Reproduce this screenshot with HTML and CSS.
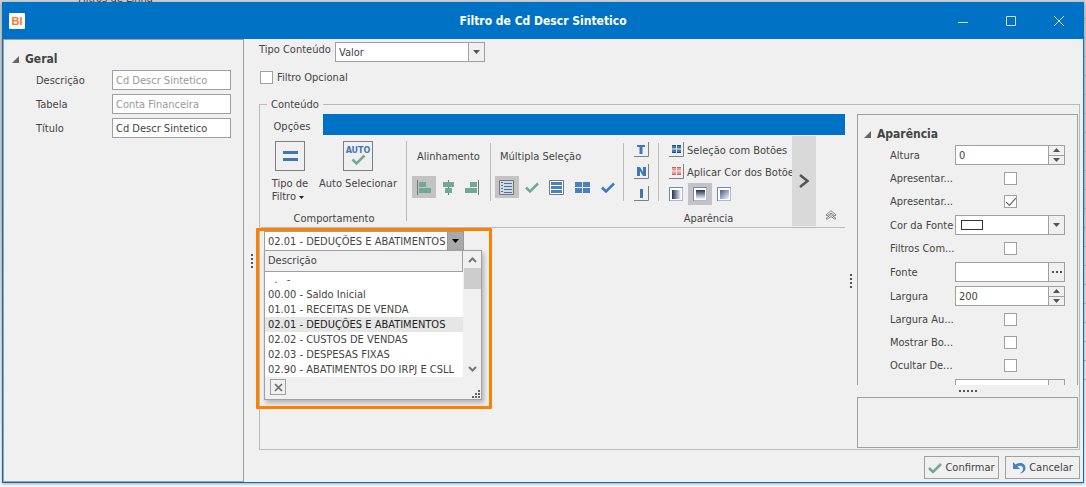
FILE: index.html
```html
<!DOCTYPE html>
<html lang="pt-BR">
<head>
<meta charset="utf-8">
<title>Filtro de Cd Descr Sintetico</title>
<link rel="stylesheet" href="styles.css">
</head>
<body>
<div class="backdrop" aria-hidden="true"><span>Filtros de Linha</span></div>
<main class="dialog">
  <header class="titlebar">
    <svg class="app-logo" viewBox="0 0 16 16"><rect width="16" height="16" rx="1" fill="#fff"/><text x="8" y="12" text-anchor="middle">BI</text></svg>
    <h1>Filtro de Cd Descr Sintetico</h1>
    <div class="window-buttons">
      <button aria-label="Minimizar"><svg viewBox="0 0 10 10"><path d="M0 6.5H10"/></svg></button>
      <button aria-label="Maximizar"><svg viewBox="0 0 10 10"><path d="M.5 .5H9.5V9.5H.5Z"/></svg></button>
      <button aria-label="Fechar"><svg viewBox="0 0 10 10"><path d="M0 0L10 10M10 0L0 10"/></svg></button>
    </div>
  </header>
  <div class="body">
    <section class="side-panel">
      <h2 class="prop-title">Geral</h2>
      <div class="prop-row"><label for="descricao">Descrição</label><input class="field" id="descricao" value="Cd Descr Sintetico" disabled></div>
      <div class="prop-row"><label for="tabela">Tabela</label><input class="field" id="tabela" value="Conta Financeira" disabled></div>
      <div class="prop-row"><label for="titulo">Título</label><input class="field" id="titulo" value="Cd Descr Sintetico"></div>
    </section>
    <div class="splitter vertical"><i></i></div>
    <section class="main">
      <div class="type-row">
        <label for="tipo">Tipo Conteúdo</label>
        <div class="select-box"><select id="tipo"><option>Valor</option></select><svg class="caret" viewBox="0 0 7 4"><path d="M0 0H7L3.500 4Z"/></svg></div>
      </div>
      <label class="optional"><input type="checkbox" class="check">Filtro Opcional</label>
      <fieldset class="content-group">
        <legend>Conteúdo</legend>
        <div class="workspace">
          <div class="tabs"><button class="tab">Opções</button><div class="tab-fill"></div></div>
          <div class="ribbon">
            <div class="ribbon-scroll">
              <div class="ribbon-group behavior">
                <div class="large-tools">
                  <button class="large-tool"><svg viewBox="0 0 30 30"><rect x=".5" y=".5" width="29" height="29" fill="#f0f0f0" stroke="#808080"/><path d="M8 10H23V13H8ZM8 17H23V20H8Z" fill="#4177b9"/></svg><span>Tipo de<br>Filtro <svg class="mini-caret" viewBox="0 0 5 3"><path d="M0 0H5L2.500 3Z"/></svg></span></button>
                  <button class="large-tool"><svg viewBox="0 0 30 30"><rect x=".5" y=".5" width="29" height="29" fill="#f0f0f0" stroke="#808080"/><text class="auto-text" x="15" y="12" text-anchor="middle">AUTO</text><path d="M9.500 18.500L13.500 22.500L21.500 14.500" fill="none" stroke="#73a896" stroke-width="2.500"/></svg><span>Auto Selecionar</span></button>
                </div>
                <div class="group-name">Comportamento</div>
              </div>
              <div class="ribbon-group appearance">
                <div class="tool-columns">
                  <div class="tool-block align">
                    <span class="tool-title">Alinhamento</span>
                    <div class="tools">
                      <button class="tool on" aria-label="Esquerda"><svg viewBox="0 0 16 16"><path d="M1.500 1V16" stroke="#777"/><path d="M3 3H10V8H3ZM3 9H15V14H3Z" fill="#73a896"/></svg></button>
                      <button class="tool" aria-label="Centro"><svg viewBox="0 0 16 16"><path d="M8.500 1V16" stroke="#777"/><path d="M3 3H14V8H3ZM5 9H12V14H5Z" fill="#73a896"/></svg></button>
                      <button class="tool" aria-label="Direita"><svg viewBox="0 0 16 16"><path d="M14.500 1V16" stroke="#777"/><path d="M6 3H13V8H6ZM1 9H13V14H1Z" fill="#73a896"/></svg></button>
                    </div>
                  </div>
                  <div class="tool-block multiple">
                    <span class="tool-title">Múltipla Seleção</span>
                    <div class="tools">
                      <button class="tool on" aria-label="Lista"><svg viewBox="0 0 16 16"><path d="M.5 1.500H14.500V15.500H.5Z" fill="#d8d8d8" stroke="#777"/><path d="M2 3.500H4M2 6.500H4M2 9.500H4M2 12.500H4M5 4.500H13M5 7.500H13M5 10.500H13M5 13.500H13" stroke="#3976bb"/></svg></button>
                      <button class="tool" aria-label="Marcar"><svg viewBox="0 0 16 16"><path d="M2 8.500L6 12.500L14 4.500" fill="none" stroke="#73a896" stroke-width="2.500"/></svg></button>
                      <button class="tool" aria-label="Linhas"><svg viewBox="0 0 16 16"><path d="M.5 1.500H14.500V15.500H.5Z" fill="#fff" stroke="#777"/><path d="M2 3H13V6H2ZM2 7H13V10H2ZM2 11H13V14H2Z" fill="#4a82bd"/></svg></button>
                      <button class="tool" aria-label="Blocos"><svg viewBox="0 0 16 16"><path d="M1 3H8V8H1ZM9 3H16V8H9ZM1 9H8V14H1ZM9 9H16V14H9Z" fill="#4a82bd"/></svg></button>
                      <button class="tool" aria-label="Confirmar seleção"><svg viewBox="0 0 16 16"><path d="M3 8.500L7 12.500L15 4.500" fill="none" stroke="#3d79c8" stroke-width="2.500"/></svg></button>
                    </div>
                  </div>
                  <div class="tool-block letters">
                    <button class="tool" aria-label="T"><svg viewBox="0 0 16 16"><path d="M1 14.500H15.500V0" fill="none" stroke="#808080"/><path d="M4 3H12V5H9.500V12H6.500V5H4Z" fill="#4177b9"/></svg></button>
                    <button class="tool" aria-label="N"><svg viewBox="0 0 16 16"><path d="M1 14.500H15.500V0" fill="none" stroke="#808080"/><path d="M4 3H7L10 8V3H13V12H10L7 7V12H4Z" fill="#4177b9"/></svg></button>
                    <button class="tool" aria-label="I"><svg viewBox="0 0 16 16"><path d="M1 14.500H15.500V0" fill="none" stroke="#808080"/><path d="M7 3H10V12H7Z" fill="#4177b9"/></svg></button>
                  </div>
                  <div class="tool-block button-styles">
                    <button class="wide-tool"><svg viewBox="0 0 16 16"><path d="M1 14.500H15.500V0" fill="none" stroke="#808080"/><path d="M4 3H8V6.500H4ZM9 3H13V6.500H9ZM4 7.500H8V11H4ZM9 7.500H13V11H9Z" fill="#4177b9"/><path d="M4 3.500H8M9 3.500H13M4 10.500H8M9 10.500H13" stroke="#294f80"/></svg>Seleção com Botões</button>
                    <button class="wide-tool"><svg viewBox="0 0 16 16"><path d="M1 14.500H15.500V0" fill="none" stroke="#808080"/><path d="M4 3H8V6.500H4ZM9 3H13V6.500H9ZM4 7.500H8V11H4ZM9 7.500H13V11H9Z" fill="#ee9a94"/><path d="M4 3.500H8M9 3.500H13M4 10.500H8M9 10.500H13" stroke="#bd6863"/></svg>Aplicar Cor dos Botões</button>
                    <div class="tools">
                      <button class="tool" aria-label="Gradiente horizontal"><svg viewBox="0 0 16 16"><defs><linearGradient id="gh"><stop stop-color="#26314d"/><stop offset="1" stop-color="#f4f6fb"/></linearGradient><linearGradient id="gv" x2="0" y2="1"><stop stop-color="#26314d"/><stop offset="1" stop-color="#f4f6fb"/></linearGradient><linearGradient id="gd" x2="1" y2="1"><stop stop-color="#46587f"/><stop offset="1" stop-color="#f4f6fb"/></linearGradient></defs><rect x="1.500" y="1.500" width="13" height="13" fill="#fff" stroke="#aab8dc"/><path d="M1.500 15V1.500H15" fill="none" stroke="#7387bb"/><rect x="4" y="4" width="9" height="9" fill="url(#gh)"/></svg></button>
                      <button class="tool on" aria-label="Gradiente vertical"><svg viewBox="0 0 16 16"><rect x="1.500" y="1.500" width="13" height="13" fill="#fff" stroke="#aab8dc"/><path d="M1.500 15V1.500H15" fill="none" stroke="#7387bb"/><rect x="4" y="4" width="9" height="9" fill="url(#gv)"/></svg></button>
                      <button class="tool" aria-label="Gradiente diagonal"><svg viewBox="0 0 16 16"><rect x="1.500" y="1.500" width="13" height="13" fill="#fff" stroke="#aab8dc"/><path d="M1.500 15V1.500H15" fill="none" stroke="#7387bb"/><rect x="4" y="4" width="9" height="9" fill="url(#gd)"/></svg></button>
                    </div>
                  </div>
                </div>
                <div class="group-name">Aparência</div>
              </div>
            </div>
            <button class="ribbon-next" aria-label="Avançar"><svg viewBox="0 0 12 14"><path d="M2 1L9.500 7L2 13" fill="none" stroke="#555" stroke-width="2.500"/></svg></button>
            <button class="ribbon-collapse" aria-label="Recolher"><svg viewBox="0 0 12 10"><path d="M1 5L6 .7L11 5L10 6L6 3L2 6ZM1 8.500L6 4.500L11 8.500L10 9.300L6 6.500L2 9.300Z" fill="#fff" stroke="#666" stroke-width=".8"/></svg></button>
          </div>
          <div class="preview">
            <div class="combo">
              <input aria-label="Conta financeira" value="02.01 - DEDUÇÕES E ABATIMENTOS">
              <button aria-label="Abrir lista"><svg viewBox="0 0 7 4"><path d="M0 0H7L3.500 4Z"/></svg></button>
              <div class="popup">
                <div class="popup-list">
                  <table>
                    <thead><tr><th>Descrição</th></tr></thead>
                    <tbody>
                      <tr><td>&nbsp; . &nbsp; -</td></tr>
                      <tr><td>00.00 - Saldo Inicial</td></tr>
                      <tr><td>01.01 - RECEITAS DE VENDA</td></tr>
                      <tr class="current"><td>02.01 - DEDUÇÕES E ABATIMENTOS</td></tr>
                      <tr><td>02.02 - CUSTOS DE VENDAS</td></tr>
                      <tr><td>02.03 - DESPESAS FIXAS</td></tr>
                      <tr><td>02.90 - ABATIMENTOS DO IRPJ E CSLL</td></tr>
                    </tbody>
                  </table>
                  <div class="scrollbar">
                    <svg viewBox="0 0 9 6"><path d="M1 5L4.500 1.500L8 5"/></svg>
                    <div class="thumb"></div>
                    <svg viewBox="0 0 9 6"><path d="M1 1L4.500 4.500L8 1"/></svg>
                  </div>
                </div>
                <div class="popup-footer">
                  <button aria-label="Limpar"><svg viewBox="0 0 9 9"><path d="M1 1L8 8M8 1L1 8"/></svg></button>
                  <svg class="grip" viewBox="0 0 8 8"><path d="M6 0H8V2H6ZM3 3H5V5H3ZM6 3H8V5H6ZM0 6H2V8H0ZM3 6H5V8H3ZM6 6H8V8H6Z"/></svg>
                </div>
              </div>
            </div>
            <div class="highlight"></div>
          </div>
        </div>
        <div class="splitter vertical narrow"><i></i></div>
        <div class="inspector">
          <section class="properties">
            <h2 class="prop-title">Aparência</h2>
            <div class="prop-row"><label for="altura">Altura</label><div class="spin"><input class="field" id="altura" value="0"><span class="spin-buttons"><button aria-label="Aumentar altura"><svg viewBox="0 0 7 4"><path d="M0 4H7L3.500 0Z"/></svg></button><button aria-label="Diminuir altura"><svg viewBox="0 0 7 4"><path d="M0 0H7L3.500 4Z"/></svg></button></span></div></div>
            <div class="prop-row flag"><label for="ap1">Apresentar...</label><input type="checkbox" class="check" id="ap1"></div>
            <div class="prop-row flag"><label for="ap2">Apresentar...</label><input type="checkbox" class="check" id="ap2" checked></div>
            <div class="prop-row"><label for="cor">Cor da Fonte</label><button class="color-box" id="cor"><span class="swatch"></span><span class="end"><svg viewBox="0 0 7 4"><path d="M0 0H7L3.500 4Z"/></svg></span></button></div>
            <div class="prop-row flag"><label for="fcom">Filtros Com...</label><input type="checkbox" class="check" id="fcom"></div>
            <div class="prop-row"><label for="fonte">Fonte</label><div class="spin"><input class="field" id="fonte"><button class="more" aria-label="Escolher fonte"><svg viewBox="0 0 10 2"><path d="M0 0H2V2H0ZM4 0H6V2H4ZM8 0H10V2H8Z"/></svg></button></div></div>
            <div class="prop-row"><label for="largura">Largura</label><div class="spin"><input class="field" id="largura" value="200"><span class="spin-buttons"><button aria-label="Aumentar largura"><svg viewBox="0 0 7 4"><path d="M0 4H7L3.500 0Z"/></svg></button><button aria-label="Diminuir largura"><svg viewBox="0 0 7 4"><path d="M0 0H7L3.500 4Z"/></svg></button></span></div></div>
            <div class="prop-row flag"><label for="laut">Largura Au...</label><input type="checkbox" class="check" id="laut"></div>
            <div class="prop-row flag"><label for="mbo">Mostrar Bo...</label><input type="checkbox" class="check" id="mbo"></div>
            <div class="prop-row flag"><label for="ode">Ocultar De...</label><input type="checkbox" class="check" id="ode"></div>
            <div class="prop-row"><label for="pos">Posição</label><div class="select-box"><select id="pos"><option>Acima</option></select></div></div>
          </section>
          <div class="splitter horizontal"><i></i></div>
          <div class="hint"></div>
        </div>
      </fieldset>
      <footer class="actions">
        <button><svg viewBox="0 0 14 14"><path d="M1 7L5 11L13 3" fill="none" stroke="#73a896" stroke-width="2.500"/></svg>Confirmar</button>
        <button><svg viewBox="0 0 14 14"><path d="M1 1V8H8L5.500 5.500C8 4 11 4.500 11 7.500C11 9.500 10 11 8 12.500C11.500 12 13.500 9.500 13.500 7C13.500 2.500 8 .5 3.500 3.500Z" fill="#4a82bd"/></svg>Cancelar</button>
      </footer>
    </section>
  </div>
</main>
</body>
</html>
```

FILE: styles.css
```css
* { box-sizing: border-box; }
body { margin: 0; padding: 2px 2px 4px; min-height: 100vh; display: flex; background: #d4d4d4; color: #444; font: 11px/15px "DejaVu Sans Condensed", "Noto Sans", sans-serif; }
button, input, select { font: inherit; color: inherit; margin: 0; padding: 0; border: 0; background: none; border-radius: 0; outline: 0; }
button { display: flex; align-items: center; justify-content: center; }
h1, h2 { margin: 0; font-size: 12px; }
svg { flex: none; display: block; }

.backdrop { position: absolute; inset: 0; overflow: hidden; background: repeating-linear-gradient(transparent 0 18px, #b5b5b5 18px 19px) right / 3px 390px no-repeat, linear-gradient(#cfcfcf 40%, #fafafa 96%); background-position: right top, 0 0; }
.backdrop span { position: absolute; left: 78px; top: -9px; }

.dialog { position: relative; flex: 1; min-width: 0; display: flex; flex-direction: column; background: #f0f0f0; border: 1px solid #0072c6; box-shadow: 0 1px 3px #0005; }
.titlebar { height: 36px; display: flex; align-items: center; padding-left: 6px; background: #0072c6; color: #fff; }
.titlebar h1 { flex: 1; text-align: center; padding-left: 122px; }
.app-logo { width: 16px; height: 16px; }
.app-logo text { font: bold 11px "Liberation Sans", sans-serif; fill: #f37b2c; }
.window-buttons { display: flex; }
.window-buttons button { width: 48px; height: 36px; }
.window-buttons svg { width: 10px; height: 10px; fill: none; stroke: #d5dbe2; }

.body { flex: 1; display: flex; min-height: 0; }
.side-panel { flex: 0 0 241px; min-width: 0; border: 1px solid #a0a0a0; padding: 11px 12px 0 8px; }
.prop-title { display: flex; align-items: center; height: 17px; }
.prop-title::before { content: ""; width: 7px; height: 7px; margin-right: 6px; background: #666; clip-path: polygon(100% 0, 100% 100%, 0 100%); }
.side-panel .prop-row label { flex: 0 0 76px; }
.prop-row { display: flex; align-items: center; height: 24px; padding-left: 24px; }
.prop-row label { flex: 0 0 65px; white-space: nowrap; }
.field { flex: 1; width: 100%; min-width: 0; height: 20px; padding: 0 3px; border: 1px solid #a0a0a0; background: #fff; }
.field:disabled { color: #999; }

.splitter { display: flex; align-items: center; justify-content: center; }
.vertical { flex: 0 0 15px; }
.vertical.narrow { flex-basis: 12px; }
.splitter i { width: 2px; height: 14px; background: repeating-linear-gradient(#555 0 2px, transparent 2px 4px); }
.splitter.horizontal { flex: 0 0 12px; }
.splitter.horizontal i { width: 18px; height: 2px; background: repeating-linear-gradient(90deg, #555 0 2px, transparent 2px 4px); }

.main { flex: 1; min-width: 0; display: flex; flex-direction: column; padding: 3px 3px 3px 0; }
.type-row { display: flex; }
.type-row label { width: 76px; }
.select-box { position: relative; display: flex; flex: 1; min-width: 0; }
.type-row .select-box { flex: 0 0 150px; }
.select-box select { appearance: none; width: 100%; height: 20px; padding: 0 3px; border: 1px solid #a0a0a0; background: linear-gradient(90deg, #a0a0a0 1px, #f0f0f0 1px) right / 16px 100% no-repeat #fff; }
.caret { position: absolute; right: 5px; top: 8px; width: 7px; height: 4px; fill: #555; pointer-events: none; }
.optional { display: flex; align-items: center; gap: 4px; align-self: flex-start; margin: 8px 0 12px 1px; }
.check { appearance: none; width: 13px; height: 13px; border: 1px solid #a0a0a0; background: #fff; }
.check:checked::before { content: ""; display: block; width: 9px; height: 4px; margin: 2px 0 0 1px; border: solid #555; border-width: 0 0 1px 1px; rotate: -48deg; }

.content-group { flex: 1; min-width: 0; min-height: 0; display: flex; margin: 0; padding: 2px 1px 1px; border: 1px solid #bbb; }
.content-group legend { margin-left: 6px; padding: 0 4px; }
.workspace { flex: 1; min-width: 0; display: flex; flex-direction: column; }
.tabs { display: flex; height: 21px; }
.tab { width: 62px; padding-top: 3px; }
.tab-fill { flex: 1; background: #0072c6; }
.ribbon { display: flex; height: 93px; padding: 1px 0; border-bottom: 1px solid #bbb; }
.ribbon-scroll { flex: 1; min-width: 0; display: flex; overflow: hidden; }
.ribbon-group { flex: none; display: flex; flex-direction: column; justify-content: space-between; padding: 5px 0 0; }
.behavior { width: 146px; background: linear-gradient(#bbb, #bbb) right 5px / 1px 80px no-repeat; }
.appearance { width: 603px; }
.group-name { text-align: center; }
.large-tools { display: flex; padding-left: 5px; }
.large-tool { flex-direction: column; justify-content: flex-start; gap: 6px; width: 48px; line-height: 13px; white-space: nowrap; }
.large-tool + .large-tool { width: 88px; }
.large-tool > svg { width: 30px; height: 30px; }
.large-tool span { text-align: left; }
.auto-text { font: bold 8px "DejaVu Sans", sans-serif; fill: #4177b9; }
.mini-caret { display: inline-block; width: 5px; height: 3px; vertical-align: middle; fill: #222; }
.tool-columns { display: flex; height: 66px; }
.tool-block { flex: none; background: linear-gradient(#bbb, #bbb) right 2px / 1px 58px no-repeat; }
.align { width: 84px; padding-left: 5px; }
.multiple { width: 133px; padding-left: 4px; }
.tool-title { display: block; height: 35px; padding: 8px 0 0 5px; }
.multiple .tools { gap: 1px; }
.letters { width: 35px; padding-left: 5px; margin-top: -2px; background-position-y: 4px; }
.button-styles { padding-left: 5px; margin-top: -2px; background: none; }
.tools { display: flex; }
.tool { width: 24px; height: 22px; }
.tool.on { background: #c3c3c3; }
.tool svg, .wide-tool svg { width: 16px; height: 16px; }
.wide-tool { height: 22px; gap: 3px; padding-left: 4px; white-space: nowrap; }
.ribbon-next { width: 24px; background: #d9d9d9; }
.ribbon-next svg { width: 12px; height: 14px; }
.ribbon-collapse { width: 29px; align-items: flex-end; padding: 0 0 6px 9px; justify-content: flex-start; }
.ribbon-collapse svg { width: 12px; height: 10px; }

.preview { position: relative; flex: 1; padding: 3px; }
.combo { position: relative; display: flex; width: 200px; height: 20px; }
.combo > input { flex: 1; min-width: 0; padding: 0 0 0 3px; border: 1px solid #a0a0a0; border-width: 1px 0 0 1px; background: #fff; white-space: nowrap; }
.combo > button { width: 17px; background: #a9a9a9; border: 1px solid #999; }
.combo > button svg { width: 7px; height: 4px; fill: #000; }
.popup { position: absolute; z-index: 2; left: 0; top: 19px; width: 218px; border: 1px solid #a0a0a0; background: #f0f0f0; box-shadow: 2px 3px 5px #0004; }
.popup-list { display: flex; }
.popup table { flex: 1; border-collapse: collapse; background: #fff; white-space: nowrap; }
.popup th { height: 20px; padding: 0 3px; text-align: left; font-weight: normal; background: #f0f0f0; border: solid #a0a0a0; border-width: 0 1px 1px 0; }
.popup td { height: 15px; padding: 0 3px; }
.popup .current { background: #e6e6e6; color: #222; }
.scrollbar { width: 18px; display: flex; flex-direction: column; align-items: center; padding: 6px 0 5px; }
.scrollbar svg { width: 9px; height: 6px; fill: none; stroke: #777; stroke-width: 2; }
.scrollbar .thumb { width: 17px; height: 21px; margin: 5px 0 auto; background: #cdcdcd; }
.popup-footer { display: flex; justify-content: space-between; align-items: center; height: 22px; padding: 0 1px 1px 5px; }
.popup-footer button { width: 16px; height: 16px; border: 1px solid #a0a0a0; }
.popup-footer button svg { width: 9px; height: 9px; stroke: #666; stroke-width: 1.5; }
.grip { width: 8px; height: 8px; fill: #666; align-self: flex-end; }
.highlight { position: absolute; z-index: 3; left: -5px; top: 0; width: 236px; height: 181px; border: 3px solid #ff8000; border-radius: 1px; pointer-events: none; }

.inspector { flex: 0 0 221px; min-width: 0; display: flex; flex-direction: column; min-height: 0; }
.properties { flex: 1 1 0; min-height: 0; overflow: hidden; padding: 11px 12px 0 6px; border: 1px solid #a0a0a0; border-bottom: 0; }
.properties .prop-row { padding-left: 26px; }
.properties .prop-row.flag { height: 23px; }
.flag .check { margin: 0 auto; }
.spin { flex: 1; display: flex; min-width: 0; height: 20px; }
.spin-buttons { flex: none; display: flex; flex-direction: column; width: 16px; border: 1px solid #a0a0a0; border-left: 0; }
.spin-buttons button { flex: 1; }
.spin-buttons button + button { border-top: 1px solid #a0a0a0; }
.spin svg, .color-box svg { width: 7px; height: 4px; fill: #555; }
.more { flex: none; width: 16px; border: 1px solid #a0a0a0; border-left: 0; }
.spin .more svg { width: 10px; height: 2px; }
.color-box { flex: 1; height: 20px; justify-content: space-between; padding-left: 5px; border: 1px solid #a0a0a0; background: #fff; }
.swatch { width: 22px; height: 10px; border: 1px solid #333; }
.end { display: flex; align-items: center; justify-content: center; width: 16px; height: 18px; border-left: 1px solid #a0a0a0; background: #f0f0f0; }
.hint { flex: 0 0 51px; border: 1px solid #a0a0a0; }

.actions { display: flex; justify-content: flex-end; gap: 6px; padding-top: 6px; }
.actions button { width: 75px; height: 23px; gap: 3px; border: 1px solid #a0a0a0; }
.actions svg { width: 14px; height: 14px; }
```
